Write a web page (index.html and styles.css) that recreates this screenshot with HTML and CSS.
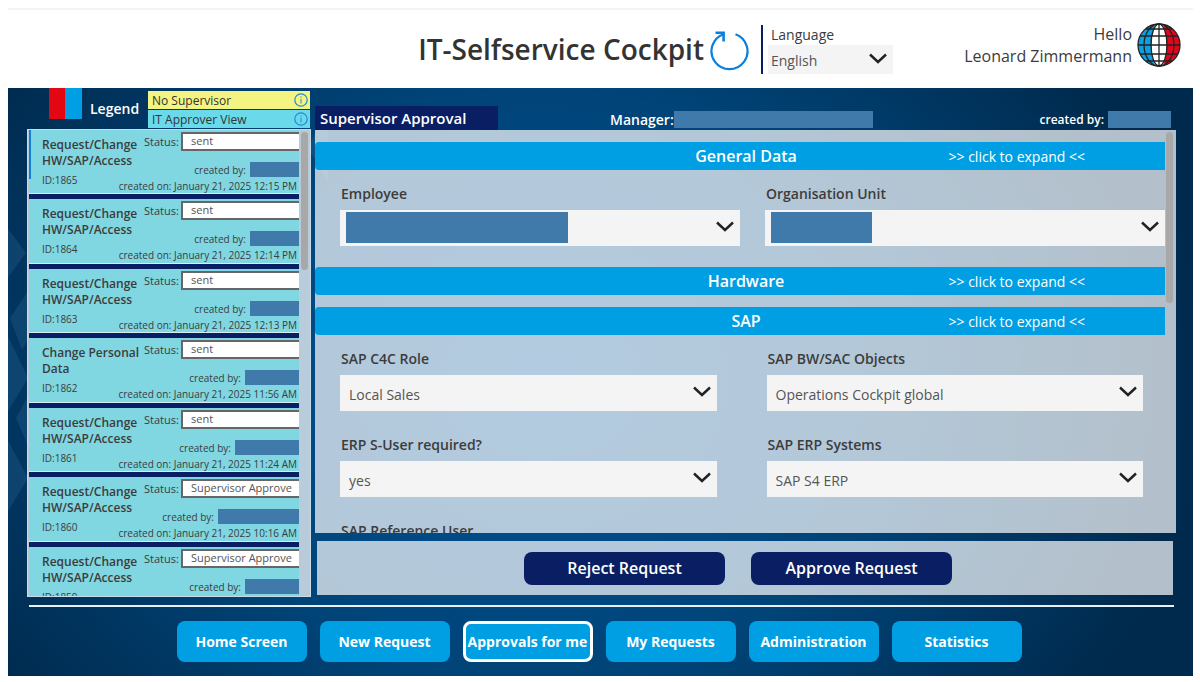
FILE: index.html
```
<!DOCTYPE html>
<html lang="en">
<head>
  <meta charset="UTF-8" />
  <meta name="viewport" content="width=device-width, initial-scale=1.0"/>
  <title>IT-Selfservice Cockpit</title>
  <link rel="stylesheet" href="styles.css">
</head>
<body>
  <svg class="icon-defs" aria-hidden="true">
    <symbol id="chevron" viewBox="0 0 18 11">
      <path d="M1 1.5 L9 9 L17 1.5" fill="none" stroke="currentColor" stroke-width="2.4"/>
    </symbol>
    <symbol id="info" viewBox="0 0 14 14">
      <circle cx="7" cy="7" r="6.2" fill="none" stroke="currentColor" stroke-width="1.2"/>
      <path d="M7 5.8V10.5M7 3.4V4.6" stroke="currentColor" stroke-width="1"/>
    </symbol>
  </svg>

  <header>
    <h1>IT-Selfservice Cockpit</h1>
    <button class="refresh-btn" aria-label="Refresh">
      <svg width="40" height="40" viewBox="0 0 40 40" fill="none" stroke="#0a7fdc">
        <path d="M25.5 3.2 A18 18 0 1 1 13.5 3.2" stroke-width="2.2"/>
        <path d="M5.5 1.8 H13.6 V10.6" stroke-width="2.6"/>
      </svg>
    </button>
    <div class="language">
      <label for="language">Language</label>
      <div class="select-wrap">
        <select id="language"><option>English</option></select>
        <svg class="chevron"><use href="#chevron"/></svg>
      </div>
    </div>
    <div class="user">
      <p>Hello<br>Leonard Zimmermann</p>
      <svg class="globe" viewBox="0 0 44 44">
        <clipPath id="globe-clip"><circle cx="22" cy="22" r="21"/></clipPath>
        <g clip-path="url(#globe-clip)">
          <rect width="44" height="44" fill="#fff"/>
          <path d="M0 0H18Q11 22 18 44H0Z" fill="#0c9fe2"/>
          <path d="M44 0H26Q33 22 26 44H44Z" fill="#e2061c"/>
        </g>
        <g fill="none" stroke="#222" stroke-width="1.3">
          <circle cx="22" cy="22" r="21"/>
          <ellipse cx="22" cy="22" rx="8" ry="21"/>
          <ellipse cx="22" cy="22" rx="15" ry="21"/>
          <path d="M22 1V43M1 22H43M3 13H41M3 31H41M9 6H35M9 38H35"/>
        </g>
      </svg>
    </div>
  </header>

  <div class="workspace">
    <svg class="backdrop" viewBox="0 0 320 588" aria-hidden="true">
      <path d="M-8 130L18 165L-8 200ZM2 230L22 200L36 225L14 262ZM-4 240L20 290L-4 330ZM8 330L30 290L50 330L26 372ZM-4 345L20 390L-4 430ZM330 0L300 60L330 110Z"/>
    </svg>

    <div class="columns">
      <aside>
        <div class="legend">
          <svg class="flag" viewBox="0 0 33 31"><path d="M0 0H16V31H0Z" fill="#e30613"/><path d="M16 0H33V31H16Z" fill="#009fe3"/></svg>
          <strong>Legend</strong>
          <ul>
            <li class="no-supervisor">No Supervisor <svg><use href="#info"/></svg></li>
            <li class="it-approver">IT Approver View <svg><use href="#info"/></svg></li>
          </ul>
        </div>

        <div class="request-list">
          <article class="card selected">
            <div class="summary"><h2>Request/Change HW/SAP/Access</h2><p>ID:1865</p></div>
            <div class="details">
              <label>Status:<input type="text" value="sent" readonly></label>
              <p>created by: <span class="masked w-50"></span></p>
              <p class="date">created on: January 21, 2025 12:15 PM</p>
            </div>
          </article>
          <article class="card">
            <div class="summary"><h2>Request/Change HW/SAP/Access</h2><p>ID:1864</p></div>
            <div class="details">
              <label>Status:<input type="text" value="sent" readonly></label>
              <p>created by: <span class="masked w-50"></span></p>
              <p class="date">created on: January 21, 2025 12:14 PM</p>
            </div>
          </article>
          <article class="card">
            <div class="summary"><h2>Request/Change HW/SAP/Access</h2><p>ID:1863</p></div>
            <div class="details">
              <label>Status:<input type="text" value="sent" readonly></label>
              <p>created by: <span class="masked w-50"></span></p>
              <p class="date">created on: January 21, 2025 12:13 PM</p>
            </div>
          </article>
          <article class="card">
            <div class="summary"><h2>Change Personal Data</h2><p>ID:1862</p></div>
            <div class="details">
              <label>Status:<input type="text" value="sent" readonly></label>
              <p>created by: <span class="masked w-54"></span></p>
              <p class="date">created on: January 21, 2025 11:56 AM</p>
            </div>
          </article>
          <article class="card">
            <div class="summary"><h2>Request/Change HW/SAP/Access</h2><p>ID:1861</p></div>
            <div class="details">
              <label>Status:<input type="text" value="sent" readonly></label>
              <p>created by: <span class="masked w-64"></span></p>
              <p class="date">created on: January 21, 2025 11:24 AM</p>
            </div>
          </article>
          <article class="card">
            <div class="summary"><h2>Request/Change HW/SAP/Access</h2><p>ID:1860</p></div>
            <div class="details">
              <label>Status:<input type="text" value="Supervisor Approve" readonly></label>
              <p>created by: <span class="masked w-82"></span></p>
              <p class="date">created on: January 21, 2025 10:16 AM</p>
            </div>
          </article>
          <article class="card">
            <div class="summary"><h2>Request/Change HW/SAP/Access</h2><p>ID:1859</p></div>
            <div class="details">
              <label>Status:<input type="text" value="Supervisor Approve" readonly></label>
              <p>created by: <span class="masked w-54"></span></p>
            </div>
          </article>
          <span class="scroll-thumb"></span>
        </div>
      </aside>

      <main>
        <div class="request-head">
          <h2>Supervisor Approval</h2>
          <p class="manager">Manager:<span class="masked"></span></p>
          <p class="creator">created by:<span class="masked"></span></p>
        </div>

        <div class="panel">
          <button class="section-bar"><span>General Data</span><small>&gt;&gt; click to expand &lt;&lt;</small></button>
          <div class="fields general">
            <div class="field">
              <label for="employee">Employee</label>
              <div class="select-wrap">
                <select id="employee"><option></option></select>
                <span class="masked value-mask wide"></span>
                <svg class="chevron"><use href="#chevron"/></svg>
              </div>
            </div>
            <div class="field">
              <label for="unit">Organisation Unit</label>
              <div class="select-wrap">
                <select id="unit"><option></option></select>
                <span class="masked value-mask"></span>
                <svg class="chevron"><use href="#chevron"/></svg>
              </div>
            </div>
          </div>

          <button class="section-bar"><span>Hardware</span><small>&gt;&gt; click to expand &lt;&lt;</small></button>
          <button class="section-bar"><span>SAP</span><small>&gt;&gt; click to expand &lt;&lt;</small></button>
          <div class="fields sap">
            <div class="field">
              <label for="c4c">SAP C4C Role</label>
              <div class="select-wrap">
                <select id="c4c"><option>Local Sales</option></select>
                <svg class="chevron"><use href="#chevron"/></svg>
              </div>
            </div>
            <div class="field">
              <label for="objects">SAP BW/SAC Objects</label>
              <div class="select-wrap">
                <select id="objects"><option>Operations Cockpit global</option></select>
                <svg class="chevron"><use href="#chevron"/></svg>
              </div>
            </div>
            <div class="field">
              <label for="suser">ERP S-User required?</label>
              <div class="select-wrap">
                <select id="suser"><option>yes</option></select>
                <svg class="chevron"><use href="#chevron"/></svg>
              </div>
            </div>
            <div class="field">
              <label for="erp">SAP ERP Systems</label>
              <div class="select-wrap">
                <select id="erp"><option>SAP S4 ERP</option></select>
                <svg class="chevron"><use href="#chevron"/></svg>
              </div>
            </div>
            <div class="field">
              <label for="refuser">SAP Reference User</label>
              <input type="text" id="refuser">
            </div>
          </div>
          <span class="scroll-thumb"></span>
        </div>

        <div class="actions">
          <button>Reject Request</button>
          <button>Approve Request</button>
        </div>
      </main>
    </div>

    <nav>
      <button>Home Screen</button>
      <button>New Request</button>
      <button class="active">Approvals for me</button>
      <button>My Requests</button>
      <button>Administration</button>
      <button>Statistics</button>
    </nav>
  </div>
</body>
</html>
```

FILE: styles.css
```
* {
  box-sizing: border-box;
}
body {
  font-family: "Open Sans", "Noto Sans", sans-serif;
  margin: 0;
  padding: 8px 7px 6px 8px;
  height: 100vh;
  display: flex;
  flex-direction: column;
  background: white;
  color: #3c3c3c;
}
h1, h2, p, ul {
  margin: 0;
  padding: 0;
}
button, input, select {
  font-family: inherit;
  border: none;
  border-radius: 0;
}
button {
  cursor: pointer;
  padding: 0;
}
.icon-defs {
  position: absolute;
  width: 0;
  height: 0;
}
.masked {
  background: #407aab;
  flex: none;
}

/* header */
header {
  display: flex;
  align-items: center;
  height: 80px;
  flex: none;
  padding-top: 2px;
  background: repeating-linear-gradient(90deg, #fff 0 5px, #dcdcdc 5px 8px, #fff 8px 20px) top / 100% 1px no-repeat;
  box-shadow: inset 0 2px #f4f4f4;
}
h1 {
  margin-left: auto;
  font-size: 28px;
  font-weight: 600;
  line-height: 36px;
  color: #333;
  white-space: nowrap;
}
.refresh-btn {
  background: none;
  width: 40px;
  height: 40px;
  margin: 4px 11px 0 6px;
}
.language {
  width: 132px;
  height: 49px;
  padding-left: 8px;
  border-left: 2px solid #0a1f63;
  font-size: 14px;
}
.language label {
  display: block;
  line-height: 20px;
}
.select-wrap {
  position: relative;
}
select {
  appearance: none;
  display: block;
  width: 100%;
  height: 36px;
  padding: 2px 30px 0 9px;
  background: #f4f4f4;
  color: #555;
  font-size: 14px;
}
.language .select-wrap {
  margin-left: -3px;
}
.language select {
  height: 29px;
  padding-left: 3px;
}
.chevron {
  position: absolute;
  right: 6px;
  top: 11px;
  width: 18px;
  height: 11px;
  color: #222;
  pointer-events: none;
}
.language .chevron {
  top: 8px;
}
.user {
  display: flex;
  align-items: center;
  justify-content: flex-end;
  gap: 5px;
  width: 300px;
  padding: 0 12px 8px 0;
}
.user p {
  font-size: 16px;
  line-height: 22px;
  text-align: right;
}
.globe {
  width: 44px;
  height: 44px;
}

/* blue area */
.workspace {
  position: relative;
  flex: 1;
  min-height: 0;
  display: flex;
  flex-direction: column;
  padding: 0 17px 14px 19px;
  background: radial-gradient(ellipse 56% 90% at 45% 50%, #00549a 0%, #004478 55%, #002a4d 100%);
}
.backdrop {
  position: absolute;
  left: 0;
  top: 0;
  width: 320px;
  height: 588px;
  fill: rgba(90, 160, 210, 0.14);
}
.columns {
  position: relative;
  flex: 1;
  min-height: 0;
  display: grid;
  grid-template-columns: 284px 1fr;
  grid-template-rows: 100%;
  gap: 4px;
}
aside, main {
  display: flex;
  flex-direction: column;
  min-height: 0;
  min-width: 0;
}
aside {
  padding-bottom: 8px;
}

/* legend */
.legend {
  display: flex;
  align-items: center;
  height: 41px;
  flex: none;
  padding-left: 22px;
  color: white;
}
.flag {
  width: 33px;
  height: 31px;
  align-self: flex-start;
}
.legend strong {
  width: 66px;
  padding-left: 8px;
  font-size: 14px;
  font-weight: 600;
}
.legend ul {
  flex: 1;
  margin: 2px 1px 0 0;
  list-style: none;
}
.legend li {
  display: flex;
  align-items: center;
  justify-content: space-between;
  height: 18px;
  padding: 0 2px 0 4px;
  color: #333;
  font-size: 12px;
}
.legend svg:not(.flag) {
  width: 14px;
  height: 14px;
  color: #2389d6;
}
.no-supervisor {
  background: #f4f482;
  margin-bottom: 1px;
}
.it-approver {
  background: #6adaea;
}

/* request cards */
.request-list {
  position: relative;
  flex: 1;
  min-height: 0;
  overflow: hidden;
  padding: 0 11px 0 1px;
  border: 1px solid #c9dbe6;
  background: rgba(255, 255, 255, 0.72);
}
.card {
  display: flex;
  height: 69px;
  padding: 2px 0 0 13px;
  background: #80d6e1;
  border-bottom: 5px solid #0a1f63;
  box-shadow: inset 0 -1px #d5edf3;
}
.card:nth-child(even) {
  height: 70px;
}
.card.selected {
  background: linear-gradient(#0a84d8, #0a84d8) left top / 2px 49px no-repeat #80d6e1;
}
.summary {
  flex: none;
  width: 102px;
  padding-top: 5px;
}
.summary h2 {
  font-size: 12px;
  font-weight: 600;
  line-height: 16px;
}
.summary p {
  margin-top: 4px;
  font-size: 10px;
  line-height: 14px;
}
.details {
  flex: 1;
  min-width: 0;
  font-size: 11px;
}
.details label {
  display: flex;
  align-items: center;
  justify-content: space-between;
}
.details input {
  width: 118px;
  height: 19px;
  padding: 0 0 2px 8px;
  border: 2px solid #666;
  border-right: none;
  color: #555;
  font-size: 11px;
}
.details p {
  display: flex;
  align-items: center;
  justify-content: flex-end;
  gap: 4px;
  height: 15px;
  margin-top: 11px;
  font-size: 10px;
  white-space: nowrap;
}
.details .date {
  height: 14px;
  margin: 2px 2px 0 0;
}
.details .masked {
  height: 15px;
}
.w-50 { width: 49px; }
.w-54 { width: 54px; }
.w-64 { width: 64px; }
.w-82 { width: 81px; }

.scroll-thumb {
  position: absolute;
  right: 2px;
  top: 2px;
  width: 7px;
  height: 138px;
  border-radius: 4px;
  background: #a8a8a8;
}

/* request form */
.request-head {
  display: grid;
  grid-template-columns: 295px 1fr auto;
  align-items: end;
  height: 42px;
  flex: none;
  padding-right: 5px;
  color: white;
}
.request-head h2 {
  width: 183px;
  height: 24px;
  padding-left: 5px;
  background: #0a1f63;
  font-size: 15px;
  font-weight: 600;
  line-height: 25px;
  white-space: nowrap;
}
.request-head p {
  display: flex;
  align-items: center;
  height: 18px;
  margin-bottom: 2px;
  font-weight: 600;
}
.manager {
  font-size: 14px;
}
.creator {
  gap: 4px;
  font-size: 12px;
}
.manager .masked {
  width: 199px;
  height: 17px;
}
.creator .masked {
  width: 63px;
  height: 17px;
}
.panel {
  position: relative;
  flex: 1;
  min-height: 0;
  overflow: hidden;
  padding: 12px 11px 0 0;
  background: rgba(255, 255, 255, 0.7);
}
.panel .scroll-thumb {
  right: 3px;
  height: 171px;
}
.section-bar {
  display: grid;
  grid-template-columns: 1fr auto 1fr;
  align-items: center;
  width: 100%;
  height: 28px;
  margin-bottom: 12px;
  padding: 0 80px 0 92px;
  border-radius: 4px 0 0 4px;
  background: #009fe3;
  color: white;
  font-size: 16px;
}
.section-bar span {
  grid-column: 2;
  font-weight: 600;
}
.section-bar small {
  justify-self: end;
  font-size: 14px;
}
.fields {
  display: grid;
  grid-template-columns: 1fr 1fr;
}
.general {
  gap: 25px;
  padding: 2px 0 21px 25px;
}
.sap {
  gap: 24px 50px;
  padding: 2px 22px 0 25px;
}
.field label {
  display: block;
  padding: 0 0 6px 1px;
  font-size: 14px;
  font-weight: 600;
  line-height: 20px;
}
.field input {
  width: 100%;
  height: 36px;
  background: #f4f4f4;
}
.value-mask {
  position: absolute;
  left: 6px;
  top: 2px;
  width: 101px;
  height: 31px;
}
.value-mask.wide {
  width: 222px;
}

/* bottom bars */
.actions {
  display: flex;
  align-items: center;
  justify-content: center;
  gap: 26px;
  height: 54px;
  flex: none;
  margin: 8px 3px 10px 2px;
  padding-right: 14px;
  background: rgba(255, 255, 255, 0.7);
}
.actions button {
  width: 201px;
  height: 33px;
  border-radius: 8px;
  background: #0a1f63;
  color: white;
  font-size: 16px;
  font-weight: 600;
}
nav {
  position: relative;
  display: flex;
  justify-content: center;
  gap: 13px;
  flex: none;
  margin: 0 2px;
  padding: 14px 5px 0 0;
  border-top: 2px solid #e8f0f5;
}
nav button {
  width: 130px;
  height: 41px;
  border-radius: 8px;
  background: #009fe3;
  color: white;
  font-size: 14px;
  font-weight: 700;
  white-space: nowrap;
}
nav .active {
  border: 3px solid white;
}
```
